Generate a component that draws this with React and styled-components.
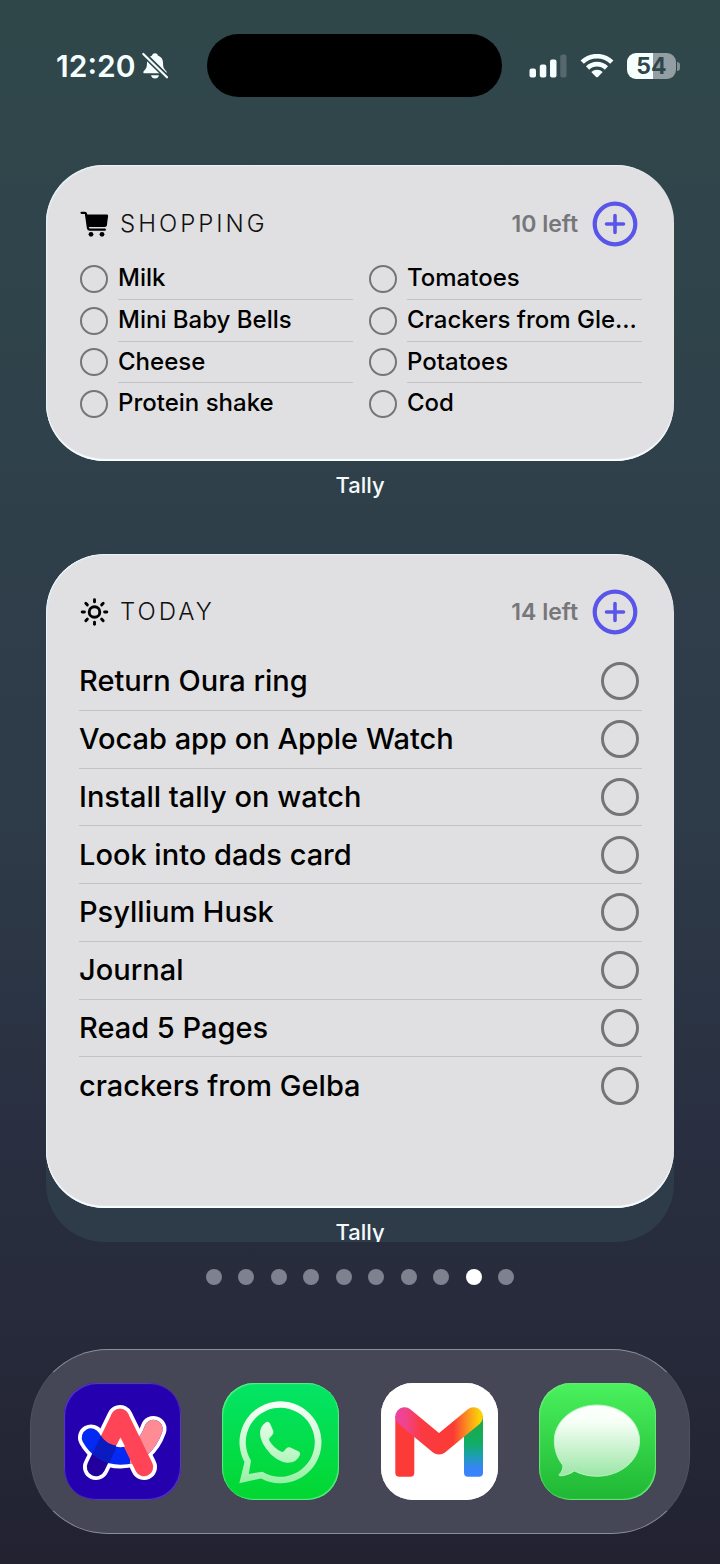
import { useState } from 'react';
import styled, { createGlobalStyle } from 'styled-components';

const shoppingItems = [
  'Milk',
  'Mini Baby Bells',
  'Cheese',
  'Protein shake',
  'Tomatoes',
  'Crackers from Gle...',
  'Potatoes',
  'Cod'
];

const todayItems = [
  'Return Oura ring',
  'Vocab app on Apple Watch',
  'Install tally on watch',
  'Look into dads card',
  'Psyllium Husk',
  'Journal',
  'Read 5 Pages',
  'crackers from Gelba'
];

const PAGE_COUNT = 10;

function BellOffIcon() {
  return (
    <svg width="28" height="28" viewBox="0 0 28 28" aria-hidden="true">
      <path
        d="M14 1.2c-1.5 0-2.600.9-2.900 2.200C7.700 4.600 6 7.200 6 10.500c0 4.600-.9 6.300-3.300 8.700-.8.9-.3 2.100.9 2.100h20.800c1.200 0 1.700-1.200.9-2.100-2.400-2.400-3.300-4.100-3.300-8.700 0-3.300-1.700-5.900-5.100-7.100-.3-1.300-1.400-2.200-2.900-2.200z"
        fill="#f6ffff"
      />
      <path d="M10 23.200h8c-.3 2-2 3.300-4 3.300s-3.700-1.300-4-3.300z" fill="#f6ffff" />
      <path d="M2 1.500 27 26" stroke="#30464b" strokeWidth="5.500" />
      <path d="M2.300 2 26 25.300" stroke="#f6ffff" strokeWidth="2.200" strokeLinecap="round" />
    </svg>
  );
}

function SignalIcon() {
  return (
    <svg width="38" height="24" viewBox="0 0 38 24" aria-hidden="true">
      <rect x="0.500" y="14.500" width="6.500" height="9" rx="2" fill="#f6ffff" />
      <rect x="10.800" y="10.500" width="6.500" height="13" rx="2" fill="#f6ffff" />
      <rect x="21" y="5.500" width="6.500" height="18" rx="2" fill="#f6ffff" />
      <rect x="31.300" y="0.500" width="6.200" height="23" rx="2" fill="#56686d" />
    </svg>
  );
}

function WifiIcon() {
  return (
    <svg width="34" height="24" viewBox="0 0 34 24" aria-hidden="true">
      <g fill="none" stroke="#f6ffff" strokeWidth="4.600">
        <path d="M2.200 8.200a21.200 21.200 0 0 1 29.600 0" />
        <path d="M7.600 14a13.400 13.400 0 0 1 18.800 0" />
      </g>
      <path d="M11.300 18a8.300 8.300 0 0 1 11.400 0l-4.800 4.900c-.6.500-1.200.5-1.800 0z" fill="#f6ffff" />
    </svg>
  );
}

function CartIcon() {
  return (
    <svg width="29" height="26" viewBox="0 0 29 26" aria-hidden="true">
      <path
        d="M1.600 1.800h3.200c.7 0 1.100.3 1.200 1L8 17c.2 1.200.8 1.700 1.800 1.700h15"
        fill="none"
        stroke="#000"
        strokeWidth="2.300"
        strokeLinecap="round"
        strokeLinejoin="round"
      />
      <path d="M5.800 3.500h20.900c1 0 1.500.6 1.400 1.600l-1.100 8.600c-.2 1.500-1 2.200-2.400 2.200H8z" />
      <circle cx="11" cy="23.300" r="2.400" />
      <circle cx="22" cy="23.300" r="2.400" />
    </svg>
  );
}

function SunIcon() {
  return (
    <svg width="29" height="28" viewBox="-14.500 -14 29 28" aria-hidden="true">
      <g fill="none" stroke="#000" strokeWidth="2.900" strokeLinecap="round">
        <circle r="5.300" />
        {[0, 45, 90, 135, 180, 225, 270, 315].map((angle) => (
          <path key={angle} d="M0-10.100V-12.300" transform={`rotate(${angle})`} />
        ))}
      </g>
    </svg>
  );
}

function PlusIcon() {
  return (
    <svg width="46" height="46" viewBox="0 0 46 46" aria-hidden="true">
      <circle cx="23" cy="23" r="20.300" fill="none" stroke="#5a55ea" strokeWidth="4.200" />
      <path d="M23 14.500v17M14.500 23h17" stroke="#5a55ea" strokeWidth="3.600" strokeLinecap="round" />
    </svg>
  );
}

function ArcLogo() {
  const arc = 'M27 53.500C33 64.500 44 71.500 56.500 71.500C72 71.500 84 61 89.500 45';
  return (
    <svg width="116" height="116" viewBox="0 0 116 116" aria-hidden="true">
      <defs>
        <clipPath id="arcLeftLeg">
          <path d="M48 30 64 38 41 88 23 80z" />
        </clipPath>
        <clipPath id="arcRight">
          <path d="M66 30h50v86H66z" />
        </clipPath>
      </defs>
      <g fill="none" stroke="#fff" strokeLinecap="round" strokeLinejoin="round" strokeWidth="26">
        <path d="M32 83 56 34 80 83" />
        <path d={arc} />
      </g>
      <g fill="none" strokeLinecap="round" strokeLinejoin="round" strokeWidth="18.500">
        <path d="M32 83 40 66.500" stroke="#23009b" />
        <path d="M45 56.500 56 34" stroke="#ff4458" />
        <path d={arc} stroke="#0429f3" />
        <path d={arc} stroke="#0a1cbd" clipPath="url(#arcLeftLeg)" />
        <path d={arc} stroke="#ff8b94" clipPath="url(#arcRight)" />
        <path d="M56 34 80 83" stroke="#ff4458" />
      </g>
      <path d="M56.500 53.500 51.800 62.500Q56.500 64 61 62.500z" fill="#fff" />
    </svg>
  );
}

function WhatsAppLogo() {
  return (
    <svg width="116" height="116" viewBox="0 0 116 116" aria-hidden="true">
      <defs>
        <linearGradient id="waGlass" x1="0" y1="17" x2="0" y2="100" gradientUnits="userSpaceOnUse">
          <stop offset="0" stopColor="#fbfffb" />
          <stop offset="0.500" stopColor="#cdf9d3" />
          <stop offset="1" stopColor="#93f1a3" />
        </linearGradient>
      </defs>
      <path
        fill="url(#waGlass)"
        fillRule="evenodd"
        d="M17.300 99.300 22.500 78A41 41 0 1 1 39 94.400ZM26.800 89.900 40.500 87.800A34.500 34.500 0 1 0 29 76.500Z"
      />
      <path
        fill="url(#waGlass)"
        d="M43 39Q46.300 36.500 48 39.500L51.300 47Q52 49.300 50.300 51L47.400 54.300Q46.800 55.500 47.400 56.800Q52 64.500 59.500 67.800Q61 68.200 62 67L65 63.800Q66.500 62.800 68.500 63.500L76.800 67.500Q78.600 68.500 78 70.800Q75 79 65 78.700Q57 78 48.500 70Q38 58.500 38 49Q38.200 42.500 43 39Z"
      />
    </svg>
  );
}

function GmailLogo() {
  return (
    <svg width="116" height="116" viewBox="0 0 116 116" aria-hidden="true">
      <defs>
        <linearGradient id="gmTop" x1="14" y1="0" x2="102" y2="0" gradientUnits="userSpaceOnUse">
          <stop offset="0" stopColor="#ee43a2" />
          <stop offset="0.130" stopColor="#f04389" />
          <stop offset="0.300" stopColor="#fb3a42" />
          <stop offset="0.660" stopColor="#fc3a36" />
          <stop offset="0.840" stopColor="#fb9a1c" />
          <stop offset="0.960" stopColor="#fbd206" />
        </linearGradient>
        <linearGradient id="gmRight" x1="0" y1="40" x2="0" y2="93" gradientUnits="userSpaceOnUse">
          <stop offset="0" stopColor="#1ba94c" />
          <stop offset="0.350" stopColor="#12ad62" />
          <stop offset="0.600" stopColor="#1c9fb0" />
          <stop offset="0.850" stopColor="#3983fb" />
        </linearGradient>
      </defs>
      <path d="M14.300 32h19v56.700a4 4 0 0 1-4 4H18.300a4 4 0 0 1-4-4z" fill="#fc3a38" />
      <path d="M83 32h19v56.700a4 4 0 0 1-4 4H87a4 4 0 0 1-4-4z" fill="url(#gmRight)" />
      <path
        d="M23.600 32.700 58 61.200 92.600 32.700"
        fill="none"
        stroke="url(#gmTop)"
        strokeWidth="18.800"
        strokeLinecap="round"
        strokeLinejoin="round"
      />
    </svg>
  );
}

function MessagesLogo() {
  return (
    <svg width="116" height="116" viewBox="0 0 116 116" aria-hidden="true">
      <defs>
        <linearGradient id="msgBubble" x1="0" y1="20" x2="0" y2="92" gradientUnits="userSpaceOnUse">
          <stop offset="0" stopColor="#fff" />
          <stop offset="0.250" stopColor="#f6fff6" />
          <stop offset="1" stopColor="#9be6a6" />
        </linearGradient>
      </defs>
      <path
        d="M58 21c23.600 0 42.600 15.900 42.600 35.600S81.600 92.200 58 92.200c-8.200 0-16-1.900-22.600-5.300-4.300 3-9.300 4.700-14.300 4.900-1.100 0-1.300-1-.5-1.700 2.500-2.400 3.700-5.600 3.200-8.900-5.400-6.700-8.500-15.200-8.500-24.600C15.300 36.900 34.400 21 58 21z"
        fill="url(#msgBubble)"
        stroke="#b9f5c0"
        strokeWidth="1"
      />
    </svg>
  );
}

const dockApps = [
  { name: 'Arc', background: '#2500ae', edge: '#5a3cc4', Logo: ArcLogo },
  { name: 'WhatsApp', background: 'linear-gradient(#04e566, #02d630)', edge: '#5cee88', Logo: WhatsAppLogo },
  { name: 'Gmail', background: '#fff', edge: '#fff', Logo: GmailLogo },
  { name: 'Messages', background: 'linear-gradient(#4af15d, #1fb734)', edge: '#6be87c', Logo: MessagesLogo }
];

function WidgetHeader({ icon, title, left }) {
  return (
    <Header>
      <IconSlot>{icon}</IconSlot>
      <Title>{title}</Title>
      <LeftCount>{left} left</LeftCount>
      <AddButton type="button" aria-label={`Add to ${title}`}>
        <PlusIcon />
      </AddButton>
    </Header>
  );
}

function App() {
  const [currentPage, setCurrentPage] = useState(8);

  return (
    <Screen>
      <GlobalStyle />
      <StatusBar>
        <StatusLeft>
          <Clock>12:20</Clock>
          <BellOffIcon />
        </StatusLeft>
        <Island />
        <StatusRight>
          <SignalIcon />
          <WifiIcon />
          <Battery>54</Battery>
        </StatusRight>
      </StatusBar>

      <Widgets>
        <Widget>
          <WidgetHeader icon={<CartIcon />} title="SHOPPING" left={10} />
          <ShoppingList>
            {shoppingItems.map((item, index) => (
              <ShoppingItem key={item}>
                <Check type="checkbox" id={`shopping-${index}`} $size={28} $line={2} />
                <ShoppingLabel htmlFor={`shopping-${index}`} $last={index % 4 === 3}>
                  {item}
                </ShoppingLabel>
              </ShoppingItem>
            ))}
          </ShoppingList>
        </Widget>
        <AppName>Tally</AppName>

        <StackPanel>
          <Widget $tall>
            <WidgetHeader icon={<SunIcon />} title="TODAY" left={14} />
            <TodayList>
              {todayItems.map((item, index) => (
                <TodayItem key={item}>
                  <TodayLabel htmlFor={`today-${index}`}>{item}</TodayLabel>
                  <Check type="checkbox" id={`today-${index}`} $size={38} $line={3} />
                </TodayItem>
              ))}
            </TodayList>
          </Widget>
          <AppName $clipped>Tally</AppName>
        </StackPanel>
      </Widgets>

      <PageDots>
        {Array.from({ length: PAGE_COUNT }, (_, index) => (
          <Dot
            key={index}
            type="button"
            aria-label={`Page ${index + 1}`}
            $active={index === currentPage}
            onClick={() => setCurrentPage(index)}
          />
        ))}
      </PageDots>

      <Dock>
        {dockApps.map(({ name, background, edge, Logo }) => (
          <DockApp key={name} type="button" aria-label={name} $background={background} $edge={edge}>
            <Logo />
          </DockApp>
        ))}
      </Dock>
    </Screen>
  );
}

export default App;

const GlobalStyle = createGlobalStyle`
  * {
    box-sizing: border-box;
  }
  body {
    margin: 0;
    background: #222231;
    font-family: Inter, 'Liberation Sans', sans-serif;
  }
  button {
    padding: 0;
    border: none;
    background: none;
    cursor: pointer;
  }
  svg {
    display: block;
  }
`;

const Screen = styled.div`
  display: flex;
  flex-direction: column;
  min-height: 100vh;
  padding: 34px 30px 30px;
  background: linear-gradient(#30474a 0%, #2f454b 14%, #2f3f4a 34%, #2e3b49 52%, #292f40 73%, #272b3b 83%, #222231 100%);
`;

const StatusBar = styled.header`
  display: grid;
  grid-template-columns: 1fr 295px 1fr;
  align-items: center;
  height: 63px;
  margin-bottom: 68px;
  padding-right: 12px;
`;

const StatusLeft = styled.div`
  display: flex;
  align-items: center;
  gap: 6px;
  padding-left: 26px;
`;

const Clock = styled.time`
  color: #f6ffff;
  font-size: 30px;
  font-weight: 600;
  line-height: 36px;
`;

const Island = styled.div`
  height: 63px;
  border-radius: 32px;
  background: #000;
`;

const StatusRight = styled.div`
  display: flex;
  align-items: center;
  justify-content: flex-end;
  gap: 13px;
  padding-right: 2px;
`;

const Battery = styled.div`
  position: relative;
  width: 49px;
  border-radius: 9px;
  background: linear-gradient(90deg, #f6ffff 53%, #929ea2 53%);
  color: #30464b;
  font-size: 23px;
  font-weight: 700;
  line-height: 26px;
  text-align: center;

  &::after {
    content: '';
    position: absolute;
    top: 9px;
    right: -4px;
    width: 3px;
    height: 9px;
    border-radius: 0 4px 4px 0;
    background: #829094;
  }
`;

const Widgets = styled.main`
  display: flex;
  flex-direction: column;
  padding: 0 16px;
`;

const Widget = styled.section`
  padding: ${({ $tall }) => ($tall ? '35px 32px 93px 33px' : '36px 32px 36px 33px')};
  border-radius: 58px;
  background: #e0e0e2;
  box-shadow:
    inset 0 -2px 1px #f8fdff,
    inset 1px 1px 1px #e6f4fb;
`;

const Header = styled.div`
  display: flex;
  align-items: center;
  height: 46px;
  padding-right: 4px;
`;

const IconSlot = styled.span`
  width: 41px;
  padding-left: 1px;
`;

const Title = styled.h2`
  flex: 1;
  margin: 0;
  color: #111;
  font-size: 24px;
  font-weight: 300;
  letter-spacing: 3px;
  line-height: 30px;
`;

const LeftCount = styled.span`
  margin-right: 14px;
  color: #77777a;
  font-size: 23px;
  font-weight: 600;
  line-height: 28px;
`;

const AddButton = styled.button`
  width: 46px;
  height: 46px;
`;

const Check = styled.input`
  flex: none;
  align-self: center;
  appearance: none;
  width: ${({ $size }) => $size}px;
  height: ${({ $size }) => $size}px;
  margin: 0;
  border: ${({ $line }) => $line}px solid #757578;
  border-radius: 50%;
  cursor: pointer;

  &:checked {
    background: #5a55ea;
  }
`;

const ShoppingList = styled.ul`
  display: grid;
  grid-template-rows: repeat(4, 1fr);
  grid-auto-columns: minmax(0, 1fr);
  grid-auto-flow: column;
  column-gap: 15px;
  height: 167px;
  margin: 11px 0 0;
  padding: 0;
  list-style: none;
`;

const ShoppingItem = styled.li`
  display: flex;
  gap: 10px;
  padding-left: 1px;
`;

const ShoppingLabel = styled.label`
  flex: 1;
  border-bottom: 1px solid ${({ $last }) => ($last ? 'transparent' : '#c3c3c6')};
  color: #000;
  font-size: 24px;
  font-weight: 500;
  line-height: 40px;
  white-space: nowrap;
`;

const TodayList = styled.ul`
  display: grid;
  grid-auto-rows: 1fr;
  height: 462px;
  margin: 18px 0 0;
  padding: 0;
  list-style: none;
`;

const TodayItem = styled.li`
  display: flex;
  align-items: center;
  justify-content: space-between;
  padding-right: 3px;
  border-bottom: 1px solid #c3c3c6;

  &:last-child {
    border-color: transparent;
  }
`;

const TodayLabel = styled.label`
  flex: 1;
  color: #000;
  font-size: 29px;
  font-weight: 500;
  line-height: 40px;
`;

const AppName = styled.p`
  margin: ${({ $clipped }) => ($clipped ? '10px 0 -4px' : '10px 0 55px')};
  color: #f4fafc;
  font-size: 22px;
  font-weight: 500;
  line-height: 28px;
  text-align: center;
`;

const StackPanel = styled.div`
  overflow: hidden;
  border-radius: 58px;
  background: #2e3b49;
`;

const PageDots = styled.nav`
  display: flex;
  align-self: center;
  justify-content: space-between;
  width: 309px;
  margin: 27px 0 64px;
`;

const Dot = styled.button`
  width: 16px;
  height: 16px;
  border-radius: 50%;
  background: ${({ $active }) => ($active ? '#fff' : '#7e818f')};
`;

const Dock = styled.footer`
  display: flex;
  align-items: center;
  justify-content: space-between;
  padding: 33px;
  border: 1px solid #6f717f;
  border-top-color: #8b8f9b;
  border-bottom-color: #8b8d9c;
  border-left-color: #50525f;
  border-right-color: #50525f;
  border-radius: 78px;
  background: #454656;
`;

const DockApp = styled.button`
  width: 117px;
  height: 117px;
  border-radius: 32px;
  background: ${({ $background }) => $background};
  box-shadow:
    inset 1px 1px 1px ${({ $edge }) => $edge},
    inset -1px -1px 1px ${({ $edge }) => $edge};
`;
